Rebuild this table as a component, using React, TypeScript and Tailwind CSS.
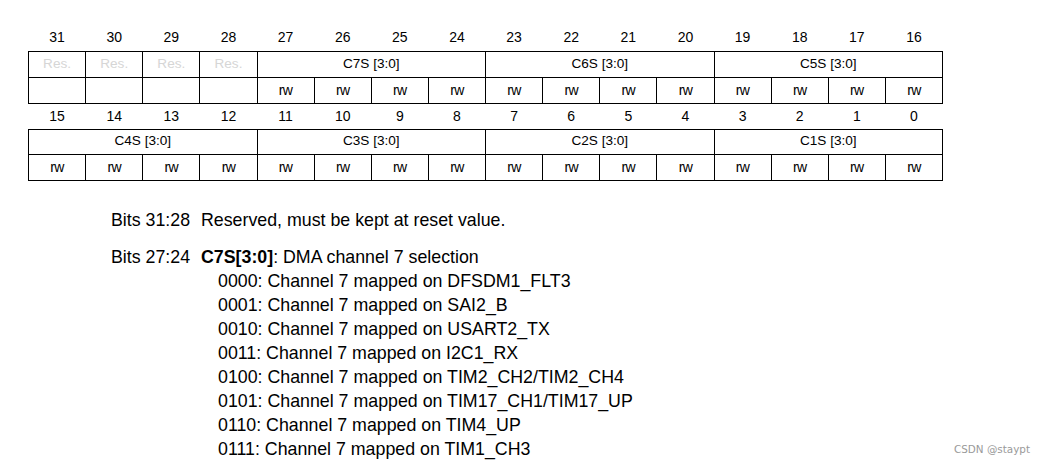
import React from "react";

const font = { fontFamily: '"Liberation Sans", Arial, sans-serif' };

type Field = { label: string; span: number; res?: boolean };

const topNums = [31, 30, 29, 28, 27, 26, 25, 24, 23, 22, 21, 20, 19, 18, 17, 16];
const botNums = [15, 14, 13, 12, 11, 10, 9, 8, 7, 6, 5, 4, 3, 2, 1, 0];

const topFields: Field[] = [
  { label: "Res.", span: 1, res: true },
  { label: "Res.", span: 1, res: true },
  { label: "Res.", span: 1, res: true },
  { label: "Res.", span: 1, res: true },
  { label: "C7S [3:0]", span: 4 },
  { label: "C6S [3:0]", span: 4 },
  { label: "C5S [3:0]", span: 4 },
];
const botFields: Field[] = [
  { label: "C4S [3:0]", span: 4 },
  { label: "C3S [3:0]", span: 4 },
  { label: "C2S [3:0]", span: 4 },
  { label: "C1S [3:0]", span: 4 },
];

const topAccess = [...Array(4).fill(""), ...Array(12).fill("rw")];
const botAccess = Array(16).fill("rw");

function NumRow({ nums, h }: { nums: number[]; h: string }) {
  return (
    <tr className={h}>
      {nums.map((n) => (
        <td key={n} className="p-0 text-center align-middle text-[14px] text-black">
          {n}
        </td>
      ))}
    </tr>
  );
}

function FieldRow({ fields, h }: { fields: Field[]; h: string }) {
  return (
    <tr className={h}>
      {fields.map((f, i) => (
        <td
          key={i}
          colSpan={f.span}
          className={`p-0 text-center align-middle text-[13.6px] border border-black ${
            f.res ? "text-[#d6d6d6]" : "text-black"
          }`}
        >
          {f.label}
        </td>
      ))}
    </tr>
  );
}

function AccessRow({ cells, h }: { cells: string[]; h: string }) {
  return (
    <tr className={h}>
      {cells.map((c, i) => (
        <td
          key={i}
          className="p-0 text-center align-middle text-[14px] tracking-[-0.6px] border border-black text-black"
        >
          {c}
        </td>
      ))}
    </tr>
  );
}

const mappings = [
  "0000: Channel 7 mapped on DFSDM1_FLT3",
  "0001: Channel 7 mapped on SAI2_B",
  "0010: Channel 7 mapped on USART2_TX",
  "0011: Channel 7 mapped on I2C1_RX",
  "0100: Channel 7 mapped on TIM2_CH2/TIM2_CH4",
  "0101: Channel 7 mapped on TIM17_CH1/TIM17_UP",
  "0110: Channel 7 mapped on TIM4_UP",
  "0111: Channel 7 mapped on TIM1_CH3",
];

export default function App() {
  return (
    <div className="relative w-[1043px] h-[469px] bg-white overflow-hidden" style={font}>
      <div className="pt-[25px] pl-[28px]">
        <table className="table-fixed border-collapse w-[914px]">
          <colgroup>
            {topNums.map((n) => (
              <col key={n} className="w-[57.125px]" />
            ))}
          </colgroup>
          <tbody>
            <NumRow nums={topNums} h="h-[26px]" />
            <FieldRow fields={topFields} h="h-[26px]" />
            <AccessRow cells={topAccess} h="h-[26px]" />
            <NumRow nums={botNums} h="h-[26px]" />
            <FieldRow fields={botFields} h="h-[25px]" />
            <AccessRow cells={botAccess} h="h-[26px]" />
          </tbody>
        </table>
      </div>

      <div className="mt-[27px] ml-[111px] text-[17.8px] leading-[24px] text-black">
        <div className="flex">
          <div className="w-[90px] shrink-0">Bits 31:28</div>
          <div>Reserved, must be kept at reset value.</div>
        </div>
        <div className="flex mt-[13px]">
          <div className="w-[90px] shrink-0">Bits 27:24</div>
          <div className="flex flex-col">
            <div>
              <span className="font-bold">C7S[3:0]</span>: DMA channel 7 selection
            </div>
            <div className="flex flex-col pl-[17px]">
              {mappings.map((m) => (
                <div key={m}>{m}</div>
              ))}
            </div>
          </div>
        </div>
      </div>

      <div
        className="absolute right-[13px] bottom-[11px] text-[10.4px] text-[#9a9a9a]"
        style={{ fontFamily: '"DejaVu Sans", sans-serif' }}
      >
        CSDN @staypt
      </div>
    </div>
  );
}
